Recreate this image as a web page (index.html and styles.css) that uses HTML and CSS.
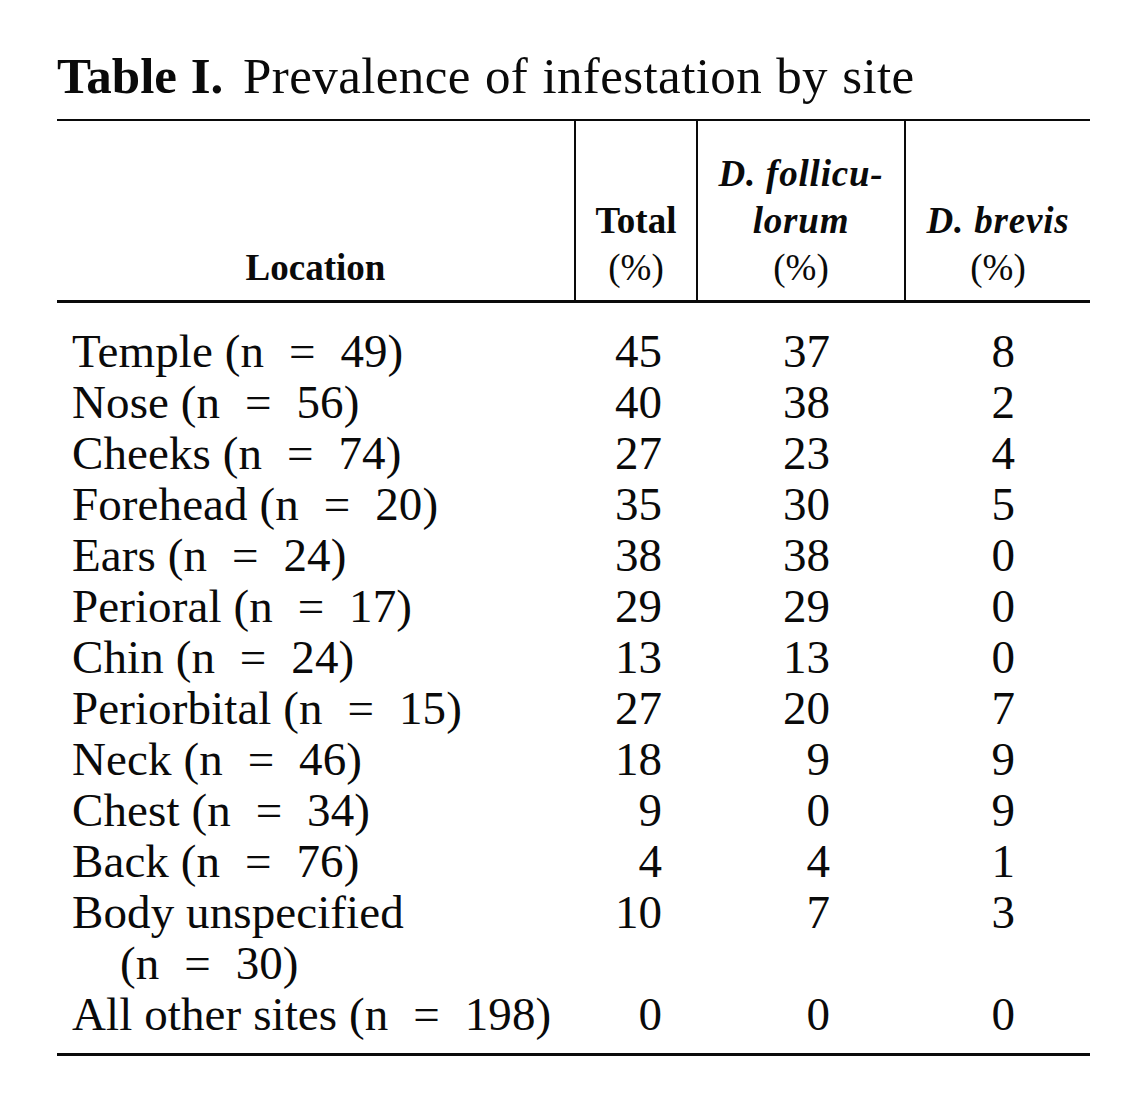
FILE: index.html
```html
<!DOCTYPE html>
<html lang="en">
<head>
<meta charset="utf-8">
<title>Table I. Prevalence of infestation by site</title>
<link rel="stylesheet" href="styles.css">
</head>
<body>
<div class="page">
  <h1 class="title"><b>Table I.</b> <span class="title-rest">Prevalence of infestation by site</span></h1>
  <table class="tbl">
    <thead>
      <tr>
        <th class="h-loc">Location</th>
        <th class="h-tot">Total<br><span class="pct">(%)</span></th>
        <th class="h-fol"><i>D. follicu-<br>lorum</i><br><span class="pct">(%)</span></th>
        <th class="h-bre"><i>D. brevis</i><br><span class="pct">(%)</span></th>
      </tr>
    </thead>
    <tbody>
      <tr class="first"><td class="loc">Temple (n <span class="eq">=</span> 49)</td><td class="n1">45</td><td class="n2">37</td><td class="n3">8</td></tr>
      <tr><td class="loc">Nose (n <span class="eq">=</span> 56)</td><td class="n1">40</td><td class="n2">38</td><td class="n3">2</td></tr>
      <tr><td class="loc">Cheeks (n <span class="eq">=</span> 74)</td><td class="n1">27</td><td class="n2">23</td><td class="n3">4</td></tr>
      <tr><td class="loc">Forehead (n <span class="eq">=</span> 20)</td><td class="n1">35</td><td class="n2">30</td><td class="n3">5</td></tr>
      <tr><td class="loc">Ears (n <span class="eq">=</span> 24)</td><td class="n1">38</td><td class="n2">38</td><td class="n3">0</td></tr>
      <tr><td class="loc">Perioral (n <span class="eq">=</span> 17)</td><td class="n1">29</td><td class="n2">29</td><td class="n3">0</td></tr>
      <tr><td class="loc">Chin (n <span class="eq">=</span> 24)</td><td class="n1">13</td><td class="n2">13</td><td class="n3">0</td></tr>
      <tr><td class="loc">Periorbital (n <span class="eq">=</span> 15)</td><td class="n1">27</td><td class="n2">20</td><td class="n3">7</td></tr>
      <tr><td class="loc">Neck (n <span class="eq">=</span> 46)</td><td class="n1">18</td><td class="n2">9</td><td class="n3">9</td></tr>
      <tr><td class="loc">Chest (n <span class="eq">=</span> 34)</td><td class="n1">9</td><td class="n2">0</td><td class="n3">9</td></tr>
      <tr><td class="loc">Back (n <span class="eq">=</span> 76)</td><td class="n1">4</td><td class="n2">4</td><td class="n3">1</td></tr>
      <tr><td class="loc">Body unspecified<span class="cont">(n <span class="eq">=</span> 30)</span></td><td class="n1">10</td><td class="n2">7</td><td class="n3">3</td></tr>
      <tr class="last"><td class="loc">All other sites (n <span class="eq">=</span> 198)</td><td class="n1">0</td><td class="n2">0</td><td class="n3">0</td></tr>
    </tbody>
  </table>
</div>
</body>
</html>
```

FILE: styles.css
```css
html, body {
  margin: 0;
  padding: 0;
  background: #fff;
}

.page {
  padding: 46px 0 0 57px;
  color: #0a0a0a;
  font-family: "Liberation Serif", "Times New Roman", serif;
}

.title {
  margin: 0 0 13px 0;
  font-size: 51px;
  line-height: 60px;
  font-weight: normal;
  white-space: nowrap;
  word-spacing: 1px;
}

.title b {
  font-weight: bold;
  margin-right: 6px;
}

.title-rest {
  letter-spacing: 0.4px;
}

.tbl {
  width: 1033px;
  border-collapse: collapse;
  border-top: 2px solid #0a0a0a;
  border-bottom: 3px solid #0a0a0a;
  table-layout: fixed;
}

.tbl th {
  font-size: 37px;
  line-height: 47px;
  font-weight: bold;
  text-align: center;
  vertical-align: bottom;
  padding: 0 0 9px 0;
  border-bottom: 3px solid #0a0a0a;
  height: 170px;
}

.tbl th + th {
  border-left: 2px solid #0a0a0a;
}

.tbl th i {
  font-style: italic;
  font-weight: bold;
  letter-spacing: 0.8px;
}

.tbl th .pct {
  font-weight: normal;
}

.h-loc { width: 517px; }
.h-tot { width: 120px; }
.h-fol { width: 206px; }

.tbl td {
  font-size: 47px;
  line-height: 51px;
  padding: 0;
  vertical-align: top;
  white-space: nowrap;
}

.tbl tr.first td {
  padding-top: 23px;
}

.tbl tr.last td {
  padding-bottom: 13px;
}

.loc {
  padding-left: 15px !important;
  text-align: left;
  letter-spacing: 0.1px;
}

.eq {
  margin: 0 13px;
}

.cont {
  display: block;
  padding-left: 48px;
}

.n1 {
  text-align: right;
  padding-right: 35px !important;
}

.n2 {
  text-align: right;
  padding-right: 75px !important;
}

.n3 {
  text-align: right;
  padding-right: 75px !important;
}
```
